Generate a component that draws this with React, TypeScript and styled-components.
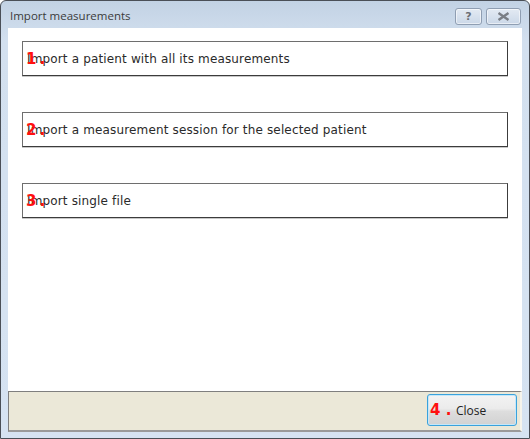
import * as React from "react";
import styled, { createGlobalStyle } from "styled-components";

const GlobalStyle = createGlobalStyle`
  html, body {
    margin: 0;
    padding: 0;
    background: #ffffff;
  }
  * {
    box-sizing: border-box;
  }
`;

const Window = styled.div`
  width: 530px;
  height: 439px;
  display: flex;
  flex-direction: column;
  border: 1px solid #4a4f57;
  border-radius: 6px 6px 0 0;
  background: linear-gradient(#c2d2e4 0px, #d3e0ef 40px, #d6e3f2 100%);
  overflow: hidden;
`;

const TitleBar = styled.div`
  height: 27px;
  display: flex;
  align-items: center;
  padding: 0 8px 0 9px;
  gap: 4px;
`;

const Title = styled.div`
  flex: 1;
  font-family: "Open Sans", "DejaVu Sans", sans-serif;
  font-size: 11.5px;
  color: #3b3b3b;
  padding-top: 2px;
`;

const CaptionButton = styled.div<{ $w: number }>`
  width: ${(p) => p.$w}px;
  height: 17px;
  margin-top: 4px;
  border: 1px solid #8f9eb2;
  border-radius: 3px;
  background: linear-gradient(#e3eaf3, #cbd8e8);
  box-shadow: inset 0 0 0 1px rgba(255, 255, 255, 0.55);
  display: flex;
  align-items: center;
  justify-content: center;
  font-family: "DejaVu Sans", sans-serif;
  font-weight: bold;
  font-size: 11px;
  color: #6b6f76;
`;

const Client = styled.div`
  flex: 1;
  margin: 0 7px;
  background: #ffffff;
  display: flex;
  flex-direction: column;
`;

const Choices = styled.div`
  flex: 1;
  display: flex;
  flex-direction: column;
  gap: 36px;
  padding: 13px 14px 0 14px;
`;

const Choice = styled.div`
  position: relative;
  height: 35px;
  display: flex;
  align-items: center;
  padding: 1px 0 0 4px;
  border-top: 1px solid #6e6e6e;
  border-left: 1px solid #6e6e6e;
  border-right: 1px solid #3c3c3c;
  border-bottom: 1px solid #3c3c3c;
  box-shadow: 0 1px 0 #c8c8c8;
  font-family: "DejaVu Sans", Verdana, sans-serif;
  font-size: 12px;
  letter-spacing: 0.15px;
  color: #2a2a2a;
`;

const Hotkey = styled.span`
  position: absolute;
  left: 3px;
  top: 10px;
  font-family: "DejaVu Sans", sans-serif;
  font-weight: bold;
  font-size: 15px;
  line-height: 15px;
  color: #ff1010;
  letter-spacing: 3px;
`;

const Footer = styled.div`
  height: 41px;
  background: #ebe8d8;
  border-top: 1px solid #7f7f7f;
  border-left: 1px solid #7f7f7f;
  border-bottom: 2px solid #9a9a9a;
  border-right: 2px solid #f6f4ec;
  display: flex;
  justify-content: flex-end;
  align-items: flex-start;
  padding: 2px 3px 0 0;
`;

const CloseButton = styled.div`
  position: relative;
  width: 90px;
  height: 32px;
  border: 1px solid #3aa2dc;
  border-radius: 3px;
  background: linear-gradient(#f3f3f3 0%, #ebebeb 45%, #dddddd 55%, #d2d2d2 100%);
  box-shadow: inset 0 0 0 1px #c6e7f8;
  display: flex;
  align-items: center;
  padding-left: 28px;
  font-family: "Open Sans", "DejaVu Sans", sans-serif;
  font-size: 12px;
  color: #222222;
`;

const CloseKey = styled.span`
  position: absolute;
  left: 2px;
  top: 8px;
  font-family: "DejaVu Sans", sans-serif;
  font-weight: bold;
  font-size: 15px;
  line-height: 15px;
  color: #ff1010;
  letter-spacing: 0px;
`;

const BottomFrame = styled.div`
  height: 6px;
`;

const choices = [
  { key: "1", text: "Import a patient with all its measurements" },
  { key: "2", text: "Import a measurement session for the selected patient" },
  { key: "3", text: "Import single file" },
];

export default function App() {
  return (
    <>
      <GlobalStyle />
      <Window>
        <TitleBar>
          <Title>Import measurements</Title>
          <CaptionButton $w={27}>?</CaptionButton>
          <CaptionButton $w={35}>
            <svg width="13" height="9" viewBox="0 0 13 9">
              <path
                d="M1.5 1 L11.5 8 M11.5 1 L1.5 8"
                stroke="#7a7e85"
                strokeWidth="2.4"
                fill="none"
              />
            </svg>
          </CaptionButton>
        </TitleBar>
        <Client>
          <Choices>
            {choices.map((c) => (
              <Choice key={c.key}>
                {c.text}
                <Hotkey>{c.key}.</Hotkey>
              </Choice>
            ))}
          </Choices>
          <Footer>
            <CloseButton>
              <CloseKey>4 .</CloseKey>
              Close
            </CloseButton>
          </Footer>
        </Client>
        <BottomFrame />
      </Window>
    </>
  );
}
